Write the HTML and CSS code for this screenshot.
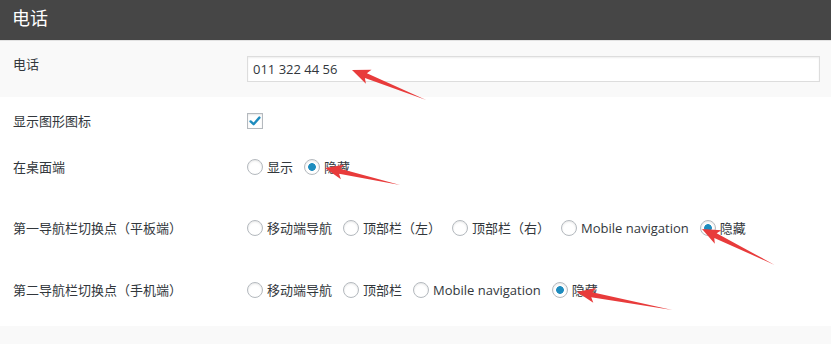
FILE: index.html
```html
<!DOCTYPE html>
<html lang="zh-CN">
<head>
<meta charset="UTF-8">
<meta name="viewport" content="width=device-width, initial-scale=1.0">
<title>电话</title>
<link rel="stylesheet" href="styles.css">
</head>
<body>

<div class="panel">
<h2 class="panel-title">电话</h2>

<div class="row row-phone">
<div class="row-label">电话</div>
<div class="row-field">
<input class="text-input" type="text" value="011 322 44 56">
</div>
</div>

<div class="row row-icon">
<div class="row-label">显示图形图标</div>
<div class="row-field">
<span class="check">
<svg width="14" height="14" viewBox="0 0 14 14"><path d="M2.6 7.4 L5.6 10.2 L11.4 3.6" fill="none" stroke="#1e8cbe" stroke-width="2.4" stroke-linecap="round" stroke-linejoin="round"/></svg>
</span>
</div>
</div>

<div class="row row-desktop">
<div class="row-label">在桌面端</div>
<div class="row-field">
<label class="choice"><input class="radio" type="radio" name="desktop">显示</label>
<label class="choice"><input class="radio" type="radio" name="desktop" checked>隐藏</label>
</div>
</div>

<div class="row row-tablet">
<div class="row-label">第一导航栏切换点（平板端）</div>
<div class="row-field">
<label class="choice"><input class="radio" type="radio" name="tablet">移动端导航</label>
<label class="choice"><input class="radio" type="radio" name="tablet">顶部栏（左）</label>
<label class="choice"><input class="radio" type="radio" name="tablet">顶部栏（右）</label>
<label class="choice"><input class="radio" type="radio" name="tablet">Mobile navigation</label>
<label class="choice"><input class="radio" type="radio" name="tablet" checked>隐藏</label>
</div>
</div>

<div class="row row-mobile">
<div class="row-label">第二导航栏切换点（手机端）</div>
<div class="row-field">
<label class="choice"><input class="radio" type="radio" name="mobile">移动端导航</label>
<label class="choice"><input class="radio" type="radio" name="mobile">顶部栏</label>
<label class="choice"><input class="radio" type="radio" name="mobile">Mobile navigation</label>
<label class="choice"><input class="radio" type="radio" name="mobile" checked>隐藏</label>
</div>
</div>

<div class="panel-foot"></div>
</div>

<!-- red annotation arrows drawn over the form -->
<svg class="marks" width="831" height="344" viewBox="0 0 831 344">
<g fill="#e83b3b">
<polygon transform="translate(352 70) rotate(22)" points="0,0 18,-7.5 15,-2.6 80,0 15,2.6 18,7.5"/>
<polygon transform="translate(325 168) rotate(12.8)" points="0,0 18,-7.5 15,-2.6 77,0 15,2.6 18,7.5"/>
<polygon transform="translate(702 229) rotate(26.3)" points="0,0 18,-7.5 15,-2.6 81,0 15,2.6 18,7.5"/>
<polygon transform="translate(577 292) rotate(10.7)" points="0,0 18,-7.5 15,-2.6 97,0 15,2.6 18,7.5"/>
</g>
</svg>

</body>
</html>
```

FILE: styles.css
```css
body {
    margin: 0;
    position: relative;
    background-color: #fff;
    color: #32373c;
    font-family: "Open Sans", "Noto Sans CJK SC", sans-serif;
    font-size: 13px;
}

.panel-title {
    margin: 0;
    height: 40px;
    padding-left: 12px;
    background-color: #464646;
    border-bottom: 1px solid #e2e2e2;
    color: #fff;
    font-size: 18px;
    font-weight: normal;
    line-height: 36px;
}

.row {
    display: flex;
    align-items: flex-start;
    box-sizing: border-box;
    line-height: 20px;
}

.row-label {
    flex: none;
    box-sizing: border-box;
    width: 247px;
    padding-left: 13px;
}

.row-field {
    flex: 1;
    display: flex;
    align-items: center;
    height: 20px;
    padding-right: 11px;
}

.row-phone {
    height: 56px;
    padding-top: 13px;
    background-color: #f9f9f9;
}
.row-phone .row-field {
    height: auto;
    padding-top: 2px;
}
.row-icon {
    height: 47px;
    padding-top: 14px;
}
.row-desktop {
    height: 54px;
    padding-top: 13px;
}
.row-tablet {
    height: 62px;
    padding-top: 20px;
}
.row-mobile {
    height: 66px;
    padding-top: 20px;
}

.text-input {
    width: 100%;
    height: 26px;
    box-sizing: border-box;
    margin: 0;
    padding: 0 5px;
    border: 1px solid #ddd;
    box-shadow: inset 0 1px 2px rgba(0, 0, 0, 0.07);
    background-color: #fff;
    color: #32373c;
    font-family: "Open Sans", sans-serif;
    font-size: 13px;
    outline: 0;
}

.check {
    display: flex;
    align-items: center;
    justify-content: center;
    width: 16px;
    height: 16px;
    box-sizing: border-box;
    border: 1px solid #b4b9be;
    box-shadow: inset 0 1px 2px rgba(0, 0, 0, 0.1);
    background-color: #fff;
}

.choice {
    display: inline-flex;
    align-items: center;
    margin-right: 11px;
    white-space: nowrap;
}

.radio {
    appearance: none;
    -webkit-appearance: none;
    width: 16px;
    height: 16px;
    box-sizing: border-box;
    margin: 0 4px 0 0;
    border: 1px solid #b4b9be;
    border-radius: 50%;
    background-color: #fff;
    box-shadow: inset 0 1px 2px rgba(0, 0, 0, 0.1);
}

.radio:checked {
    background: radial-gradient(circle, #1e8cbe 0 3.5px, #fff 4.2px);
}

.panel-foot {
    height: 18px;
    background-color: #f9f9f9;
}

.marks {
    position: absolute;
    top: 0;
    left: 0;
    pointer-events: none;
}
```
